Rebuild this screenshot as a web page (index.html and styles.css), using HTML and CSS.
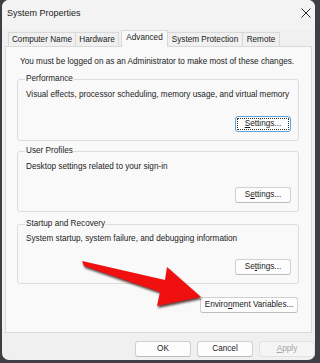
FILE: index.html
```html
<!DOCTYPE html>
<html>
<head>
<meta charset="utf-8">
<link rel="stylesheet" href="styles.css">
</head>
<body>
<div class="window">
  <div class="titlebar">
    <span class="title">System Properties</span>
    <svg class="close" width="10" height="10" viewBox="0 0 10 10"><path d="M0.5 0.5 L9.5 9.5 M9.5 0.5 L0.5 9.5" stroke="#2b2b2b" stroke-width="1" fill="none"/></svg>
  </div>
  <div class="tabs">
    <div class="tab tab-cn">Computer Name</div>
    <div class="tab tab-hw">Hardware</div>
    <div class="tab tab-adv selected">Advanced</div>
    <div class="tab tab-sp">System Protection</div>
    <div class="tab tab-rm">Remote</div>
  </div>
  <div class="panel">
    <div class="note">You must be logged on as an Administrator to make most of these changes.</div>
    <div class="group group-perf">
      <div class="legend">Performance</div>
      <div class="desc">Visual effects, processor scheduling, memory usage, and virtual memory</div>
      <div class="btn btn-settings focused"><u>S</u>ettings...</div>
    </div>
    <div class="group group-user">
      <div class="legend">User Profiles</div>
      <div class="desc">Desktop settings related to your sign-in</div>
      <div class="btn btn-settings">S<u>e</u>ttings...</div>
    </div>
    <div class="group group-start">
      <div class="legend">Startup and Recovery</div>
      <div class="desc">System startup, system failure, and debugging information</div>
      <div class="btn btn-settings">Se<u>t</u>tings...</div>
    </div>
    <div class="envrow">
      <div class="btn btn-env">Enviro<u>n</u>ment Variables...</div>
    </div>
  </div>
  <div class="footer">
    <div class="btn btn-foot">OK</div>
    <div class="btn btn-foot">Cancel</div>
    <div class="btn btn-foot disabled"><u>A</u>pply</div>
  </div>
</div>
<svg class="arrow" width="320" height="363" viewBox="0 0 320 363">
  <path d="M82 261 L165 280 L167 267 L201 297 L157 306 L160 292 L84 266 Z" fill="#f01010"/>
</svg>
</body>
</html>
```
FILE: styles.css
```css
html, body {
  margin: 0;
  padding: 0;
}
body {
  width: 320px;
  height: 363px;
  background: #3d3f44;
  font-family: "Liberation Sans", Arial, sans-serif;
  font-size: 8.2px;
  color: #1b1b1b;
  position: relative;
  overflow: hidden;
}
.window {
  margin-left: 2px;
  width: 313px;
  height: 360px;
  background: #f0f0f0;
  border-radius: 7px;
  box-sizing: border-box;
  overflow: hidden;
}
.titlebar {
  height: 30px;
  display: flex;
  align-items: center;
  justify-content: space-between;
  padding: 0 4px 4px 5px;
  box-sizing: border-box;
  background: #f3f3f3;
}
.title {
  font-size: 9px;
}
.close {
  display: block;
}
.tabs {
  display: flex;
  align-items: flex-end;
  height: 16px;
  margin-left: 6px;
}
.tab {
  height: 14px;
  line-height: 14px;
  box-sizing: border-box;
  border: 1px solid #d9d9d9;
  border-bottom: none;
  background: #f0f0f0;
  text-align: center;
  white-space: nowrap;
}
.tab-cn { width: 68px; }
.tab-hw { width: 43px; border-left: none; }
.tab-adv { width: 47px; margin-left: 2px; }
.tab-sp { width: 75px; border-left: none; }
.tab-rm { width: 37px; border-left: none; }
.tab.selected {
  height: 17px;
  line-height: 14px;
  background: #f9f9f9;
  margin-bottom: -1px;
  position: relative;
  z-index: 1;
}
.panel {
  margin-left: 3px;
  width: 307px;
  height: 287px;
  box-sizing: border-box;
  border: 1px solid #d9d9d9;
  background: #f9f9f9;
  padding: 9px 0 0 11px;
}
.note {
  line-height: 12px;
  margin-left: 3px;
  white-space: nowrap;
}
.group {
  width: 282px;
  box-sizing: border-box;
  border: 1px solid #dcdcdc;
  border-radius: 3px;
  display: flex;
  flex-direction: column;
  padding: 0 7px 8px 7px;
}
.group-perf { margin-top: 11px; height: 62px; }
.group-user { margin-top: 10px; height: 61px; }
.group-start { margin-top: 12px; height: 60px; }
.legend {
  line-height: 12px;
  margin-top: -7px;
  padding: 0 1px;
  background: #f9f9f9;
  align-self: flex-start;
  white-space: nowrap;
}
.desc {
  line-height: 12px;
  margin-top: 4px;
  margin-left: 1px;
  white-space: nowrap;
}
.group-start .desc { margin-top: 3px; }
.btn {
  height: 16px;
  line-height: 14px;
  box-sizing: border-box;
  border: 1px solid #d0d0d0;
  border-bottom-color: #bdbdbd;
  border-radius: 3px;
  background: #fdfdfd;
  text-align: center;
  white-space: nowrap;
}
.btn-settings {
  width: 56px;
  margin-top: auto;
  align-self: flex-end;
}
.btn.focused {
  border-color: #5f9fd3;
  outline: 1px dotted #333;
  outline-offset: -3px;
}
.envrow {
  width: 281px;
  display: flex;
  justify-content: flex-end;
  margin-top: 13px;
}
.btn-env {
  width: 98px;
}
.footer {
  display: flex;
  justify-content: flex-end;
  gap: 6px;
  padding: 8px 0 0 0;
}
.btn-foot {
  width: 56px;
}
.btn-foot.disabled {
  color: #a3a3a3;
  background: #f5f5f5;
  border-color: #e2e2e2;
}
.arrow {
  position: absolute;
  left: 0;
  top: 0;
  pointer-events: none;
  filter: drop-shadow(1px 2px 1px rgba(40, 0, 0, 0.75));
}
```
